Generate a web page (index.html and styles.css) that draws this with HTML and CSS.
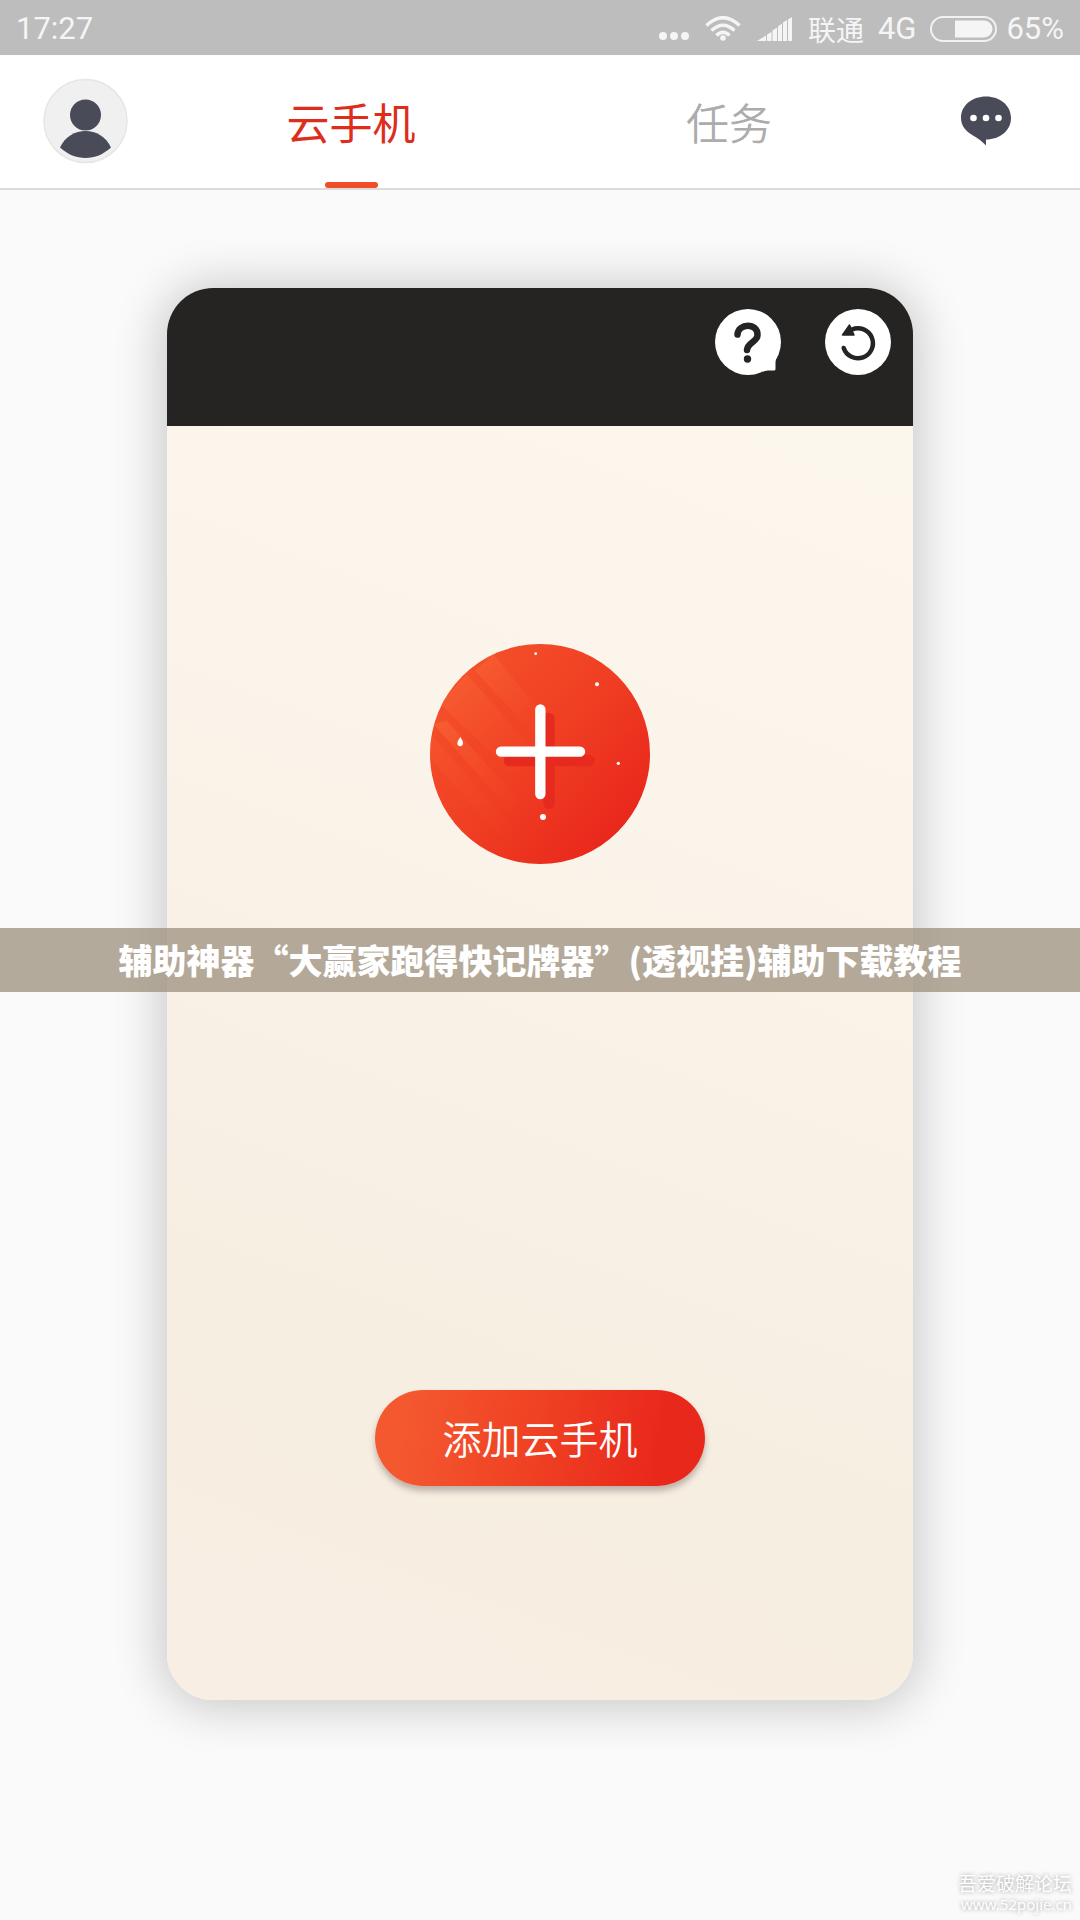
FILE: index.html
```html
<!DOCTYPE html>
<html lang="zh-CN">
  <head>
    <meta charset="UTF-8" />
    <meta name="viewport" content="width=device-width, initial-scale=1.0" />
    <title>云手机</title>
    <link rel="stylesheet" href="styles.css">
  </head>
  <body>
    <div class="status-bar">
      <span class="time">17:27</span>
      <svg class="icon-dots" width="30" height="8" viewBox="0 0 30 8">
        <circle cx="4" cy="4" r="4" />
        <circle cx="15" cy="4" r="4" />
        <circle cx="26" cy="4" r="4" />
      </svg>
      <svg class="icon-wifi" width="36" height="25" viewBox="0 0 36 25">
        <path d="M1.5 9.5Q18-6 34.5 9.5M6.5 14.500Q18 4 29.500 14.500M11.500 19.500Q18 13 24.500 19.500" />
        <circle cx="18" cy="22" r="2.8" />
      </svg>
      <svg class="icon-signal" width="35" height="24" viewBox="0 0 35 24">
        <path d="M0 24L9 18.5V24ZM10 17.5L14.500 15V24H10ZM15.500 13.5L20 10.5V24H15.500ZM21 9.5L25 6.5V24H21ZM26 5.5L30 3V24H26ZM31 2.5L35 0V24H31Z" />
      </svg>
      <span class="carrier">联通</span>
      <span class="network">4G</span>
      <svg class="icon-battery" width="68" height="26" viewBox="0 0 68 26">
        <rect x="1" y="1" width="65" height="24" rx="12" />
        <path d="M25 4.5H54a8.5 8.5 0 0 1 0 17H25Z" />
      </svg>
      <span class="percent">65%</span>
    </div>

    <header class="header">
      <button class="icon-button avatar" type="button" aria-label="我的">
        <svg width="86" height="86" viewBox="0 0 86 86">
          <circle cx="42.500" cy="43" r="41.500" fill="#f0f0f0" stroke="#e6e6e4" stroke-width="1.5" />
          <circle cx="42.500" cy="37" r="15.5" fill="#4a4b59" />
          <path d="M17 69.500C22 58.500 32 53 42.500 53S63 58.500 68 69.500C60 76.500 52 80 42.500 80S25 76.500 17 69.500Z" fill="#4a4b59" />
        </svg>
      </button>
      <nav class="tabs">
        <a class="tab active" href="#cloud">云手机</a>
        <a class="tab" href="#tasks">任务</a>
      </nav>
      <button class="icon-button message" type="button" aria-label="消息">
        <svg width="50" height="50" viewBox="0 0 50 50">
          <path d="M25 .5C39 .5 50 9.500 50 22 50 34.500 39 43.500 25 43.500V49.500C22 46 17 42.500 12 39.500 4.500 35 0 29.500 0 22 0 9.500 11 .5 25 .5Z" fill="#4a4b59" />
          <circle cx="12.5" cy="22" r="3.3" fill="#fff" />
          <circle cx="25" cy="22" r="3.3" fill="#fff" />
          <circle cx="37.5" cy="22" r="3.3" fill="#fff" />
        </svg>
      </button>
    </header>

    <main class="content" id="cloud">
      <section class="phone">
        <div class="phone-top">
          <button class="icon-button" type="button" aria-label="帮助">
            <svg width="66" height="66" viewBox="0 0 66 66">
              <circle cx="33" cy="33" r="33" fill="#fff" />
              <path d="M62 48Q60.500 50 60.500 53V60Q60.500 61.500 59 61.500H53Q50 61.500 47 63Z" fill="#fff" />
              <path d="M22.5 25.500C23 14 43 13.500 42.500 26C42.500 33 32.500 33 32 41" fill="none" stroke="#252422" stroke-width="6.5" stroke-linecap="round" />
              <circle cx="32.5" cy="50" r="3.7" fill="#252422" />
            </svg>
          </button>
          <button class="icon-button" type="button" aria-label="刷新">
            <svg width="66" height="66" viewBox="0 0 66 66">
              <circle cx="33" cy="33" r="33" fill="#fff" />
              <path d="M27 20.500A15 15 0 1 1 18.700 39" fill="none" stroke="#252422" stroke-width="4.500" stroke-linecap="round" />
              <path d="M24.500 16L17.500 26H29Z" fill="#252422" stroke="#252422" stroke-width="1.5" stroke-linejoin="round" />
            </svg>
          </button>
        </div>
        <div class="phone-screen">
          <button class="icon-button" type="button" aria-label="添加">
            <svg width="220" height="220" viewBox="0 0 660 660">
              <defs>
                <linearGradient id="disc" x1="0.1" y1="0.15" x2="0.85" y2="0.85">
                  <stop offset="0" stop-color="#f4502a" />
                  <stop offset="0.5" stop-color="#f03f23" />
                  <stop offset="1" stop-color="#e9281c" />
                </linearGradient>
                <linearGradient id="ray" x1="0" y1="0" x2="1" y2="1">
                  <stop offset="0" stop-color="#f86032" stop-opacity="0.9" />
                  <stop offset="1" stop-color="#f2482a" stop-opacity="0" />
                </linearGradient>
                <clipPath id="round"><circle cx="330" cy="330" r="330" /></clipPath>
              </defs>
              <g clip-path="url(#round)">
                <rect width="660" height="660" fill="url(#disc)" />
                <path d="M135 80L190 30 360 240 320 280Z" fill="url(#ray)" />
                <path d="M30 180L110 90 320 330 250 390Z" fill="url(#ray)" />
                <path d="M10 240L50 230 270 470 240 500Z" fill="url(#ray)" />
                <path d="M0 340L0 270 260 560 220 590Z" fill="url(#ray)" opacity="0.4" />
              </g>
              <path d="M357 223V478M238 350H477" stroke="#e62a1f" stroke-width="34" stroke-linecap="round" />
              <path d="M331 196V450M213 323H450" stroke="#fff" stroke-width="31" stroke-linecap="round" />
              <g fill="#fff">
                <circle cx="317" cy="29" r="4" />
                <circle cx="501" cy="121" r="6" />
                <circle cx="565" cy="358" r="5" />
                <circle cx="339" cy="519" r="9" />
                <path d="M91 279C94 286 99 290 99 298A8 8 0 0 1 82 298C82 290 88 286 91 279Z" />
              </g>
            </svg>
          </button>
          <button class="btn-add" type="button">添加云手机</button>
        </div>
      </section>
    </main>

    <div class="banner">辅助神器“大赢家跑得快记牌器”(透视挂)辅助下载教程</div>
    <div class="watermark">
      <span class="site-name">吾爱破解论坛</span>
      <span class="site-url">www.52pojie.cn</span>
    </div>
  </body>
</html>
```
FILE: styles.css
```css
* {
  box-sizing: border-box;
}

body {
  position: relative;
  min-height: 100vh;
  margin: 0;
  background-color: #fafafa;
  font-family: Roboto, "Noto Sans CJK SC", sans-serif;
}

button {
  border: none;
  cursor: pointer;
}

svg {
  display: block;
}

/* Status bar */
.status-bar {
  display: flex;
  align-items: center;
  height: 55px;
  padding: 2px 16px 0;
  background-color: #bdbdbd;
  color: #f5f5f5;
  fill: #f5f5f5;
  font-size: 31px;
  line-height: 40px;
}

.time {
  margin-right: auto;
}

.icon-dots {
  margin: 14px 16px 0 0;
}

.icon-wifi {
  margin-right: 16px;
}

.icon-wifi path {
  fill: none;
  stroke: #f5f5f5;
  stroke-width: 3.5;
}

.icon-signal {
  margin-right: 16px;
}

.carrier {
  margin-right: 14px;
  font-family: "Noto Sans CJK SC", sans-serif;
  font-size: 28px;
}

.network {
  margin-right: 14px;
}

.icon-battery {
  margin-right: 8px;
}

.icon-battery rect {
  fill: none;
  stroke: #f5f0ee;
  stroke-width: 2;
}

/* Header with tabs */
.header {
  display: grid;
  grid-template-columns: 1fr 70% 1fr;
  height: 135px;
  border-bottom: 2px solid #dcdbd8;
  background-color: #fff;
}

.icon-button {
  padding: 0;
  background: none;
}

.avatar {
  justify-self: start;
  align-self: start;
  margin: 23px 0 0 43px;
}

.message {
  justify-self: end;
  align-self: start;
  margin: 41px 69px 0 0;
}

.tabs {
  display: flex;
}

.tab {
  display: flex;
  flex: 1;
  flex-direction: column;
  align-items: center;
  justify-content: space-between;
  padding-top: 34px;
  color: #acacac;
  font-family: "Noto Sans CJK SC", sans-serif;
  font-size: 43px;
  font-weight: 350;
  line-height: 64px;
  text-decoration: none;
}

.tab.active {
  color: #de2d1c;
  font-weight: 400;
}

.tab.active::after {
  content: "";
  width: 53px;
  height: 6px;
  border-radius: 3px;
  background-color: #f04e2a;
}

/* Phone card */
.content {
  padding: 98px 24px 220px;
}

.phone {
  max-width: 746px;
  margin: 0 auto;
  overflow: hidden;
  border-radius: 46px;
  background: linear-gradient(200deg, #fcf7ed, #fbf4ea 35%, #f7eee2 75%, #f8eee3);
  box-shadow: 0 2px 48px 6px rgba(0, 0, 0, 0.2);
}

.phone-top {
  display: flex;
  justify-content: flex-end;
  gap: 44px;
  padding: 21px 22px 51px;
  background-color: #252422;
}

.phone-screen {
  display: flex;
  flex-direction: column;
  align-items: center;
  gap: 526px;
  padding: 218px 0 214px;
}

.btn-add {
  width: 330px;
  height: 96px;
  padding: 0 0 2px;
  border-radius: 48px;
  background: linear-gradient(100deg, #f4582f 10%, #ef4023 50%, #e9281c 85%);
  box-shadow: 0 5px 6px rgba(80, 60, 60, 0.35);
  color: #fff;
  font-family: "Noto Sans CJK SC", sans-serif;
  font-size: 39px;
  font-weight: 350;
}

/* Title over the page */
.banner {
  position: absolute;
  top: 50%;
  right: 0;
  left: 0;
  transform: translateY(-50%);
  background-color: rgba(162, 150, 133, 0.8);
  color: #fff;
  font-family: "Noto Sans CJK SC", sans-serif;
  font-size: 34px;
  font-weight: 900;
  line-height: 64px;
  text-align: center;
}

.watermark {
  position: absolute;
  right: 8px;
  bottom: 6px;
  display: flex;
  flex-direction: column;
  align-items: flex-end;
  color: #fff;
  font-family: "Noto Sans CJK SC", sans-serif;
  text-shadow: 0 0 4px #999;
}

.site-name {
  font-size: 19px;
  line-height: 22px;
}

.site-url {
  font-family: "Noto Sans", sans-serif;
  font-size: 15px;
  line-height: 20px;
}
```
